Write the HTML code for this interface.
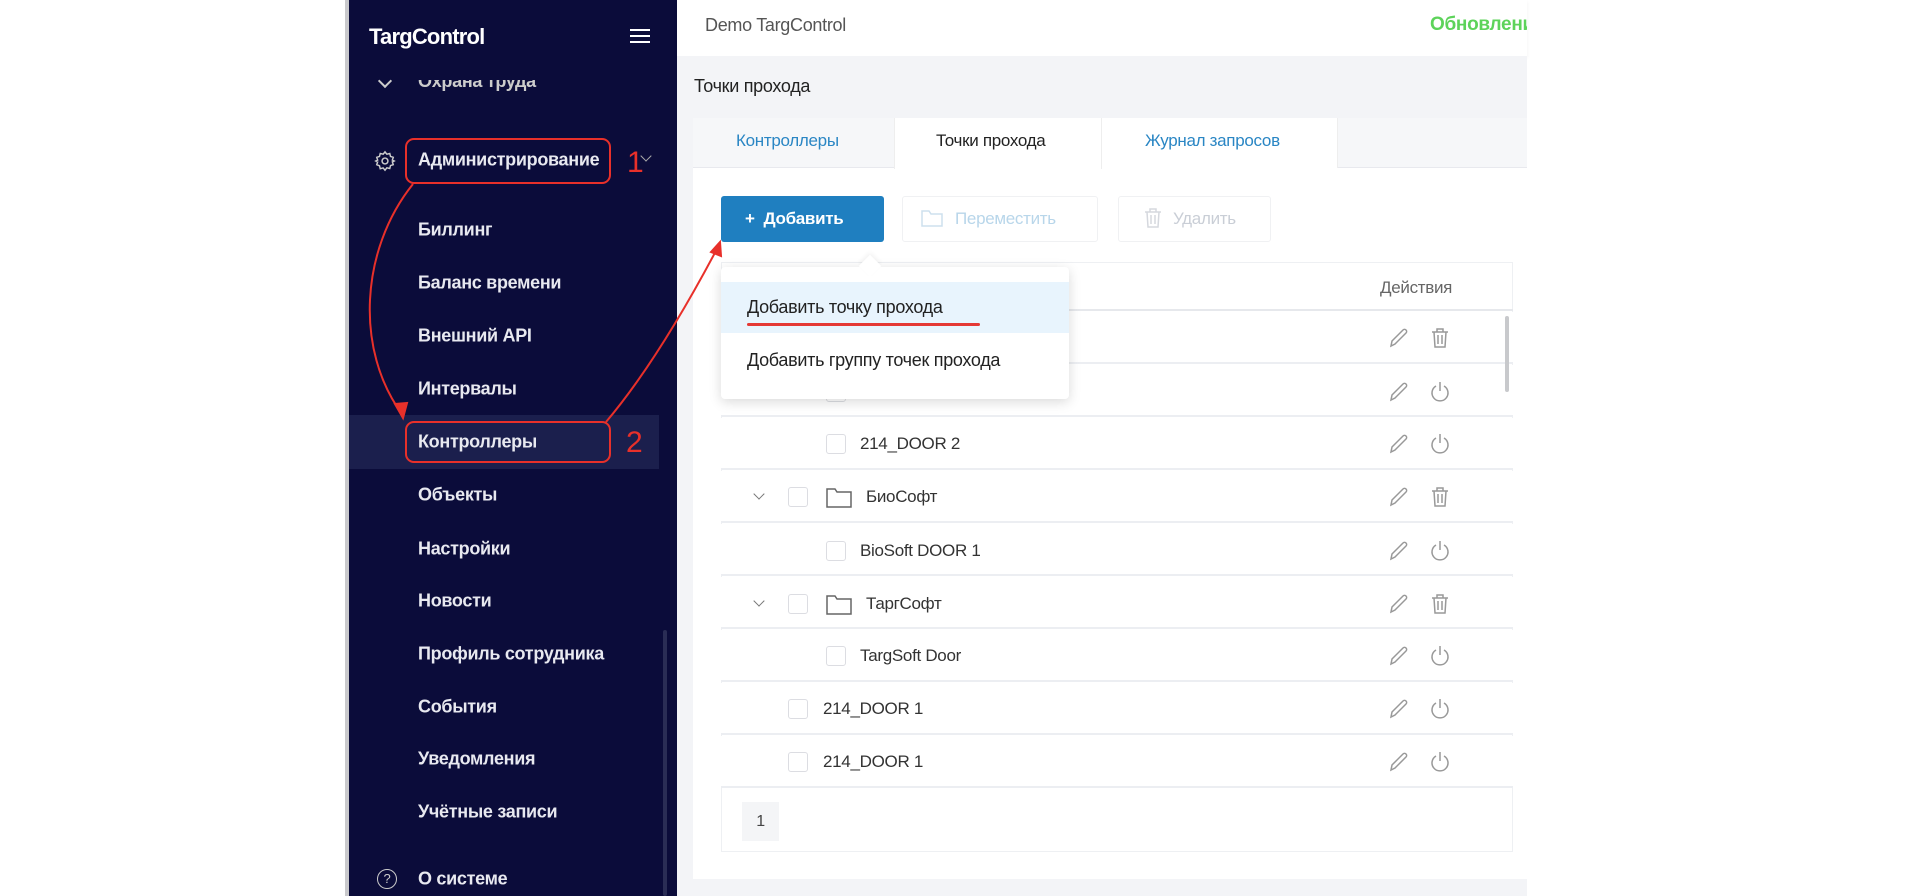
<!DOCTYPE html>
<html><head><meta charset="utf-8"><style>
*{margin:0;padding:0;box-sizing:border-box}
body{width:1920px;height:896px;position:relative;overflow:hidden;background:#fff;font-family:"Liberation Sans","Noto Sans CJK SC",sans-serif;letter-spacing:-0.3px}
.a{position:absolute;white-space:nowrap}
.sb{position:absolute;left:349px;top:0;width:328px;height:896px;background:#0b0c3a}
.mi{position:absolute;left:418px;color:#e8e9f0;font-size:18px;font-weight:bold;transform:translateY(-50%)}
.row{position:absolute;left:721px;width:792px;height:52px;border-bottom:2px solid #eceef2;background:#fff}
.t{position:absolute;font-size:17px;color:#333;transform:translateY(-50%)}
.cb{position:absolute;width:20px;height:20px;border:1px solid #dcdde2;border-radius:3px;background:#fff;transform:translateY(-50%)}
</style></head><body>
<div class="a" style="left:345px;top:0;width:4px;height:896px;background:#c9c9cc"></div>
<div class="sb"></div>
<div class="a" style="left:369px;top:24px;color:#fff;font-size:22px;font-weight:bold;letter-spacing:-0.8px">TargControl</div>
<div class="a" style="left:630px;top:29px;width:20px;height:2px;background:#fff;box-shadow:0 6px 0 #fff,0 12px 0 #fff"></div>
<div class="a" style="left:380px;top:76px;width:10px;height:10px;border-right:2px solid #ccc;border-bottom:2px solid #ccc;transform:rotate(45deg)"></div>
<div class="a" style="left:418px;top:80px;width:200px;height:14px;overflow:hidden"><div class="a" style="left:0;top:-9px;color:#ccc;font-size:18px;font-weight:bold">Охрана труда</div></div>
<svg class="a" style="left:374px;top:150px" width="22" height="22" viewBox="0 0 24 24" fill="none" stroke="#ccc" stroke-width="1.6"><circle cx="12" cy="12" r="3.2"/><path d="M12 2l2 2.6 3.2-.8.8 3.2L21 8l-1 3 2 1-2 1 1 3-3 1-.8 3.2-3.2-.8L12 22l-2-2.4-3.2.8L6 17.2 3 16l1-3-2-1 2-1-1-3 3-1 .8-3.2 3.2.8z"/></svg>
<div class="mi" style="top:160px">Администрирование</div>
<div class="a" style="left:642px;top:152px;width:8px;height:8px;border-right:1.5px solid #aaa;border-bottom:1.5px solid #aaa;transform:rotate(45deg)"></div>
<div class="a" style="left:349px;top:415px;width:310px;height:54px;background:#1b1f4d"></div>
<div class="mi" style="top:230px">Биллинг</div>
<div class="mi" style="top:283px">Баланс времени</div>
<div class="mi" style="top:336px">Внешний API</div>
<div class="mi" style="top:389px">Интервалы</div>
<div class="mi" style="top:442px">Контроллеры</div>
<div class="mi" style="top:495px">Объекты</div>
<div class="mi" style="top:549px">Настройки</div>
<div class="mi" style="top:601px">Новости</div>
<div class="mi" style="top:654px">Профиль сотрудника</div>
<div class="mi" style="top:707px">События</div>
<div class="mi" style="top:759px">Уведомления</div>
<div class="mi" style="top:812px">Учётные записи</div>
<div class="a" style="left:377px;top:869px;width:20px;height:20px;border:1.6px solid #ccc;border-radius:50%;color:#ccc;font-size:13px;text-align:center;line-height:17px">?</div>
<div class="mi" style="top:879px">О системе</div>
<div class="a" style="left:663px;top:630px;width:4px;height:266px;background:#2a2d55;border-radius:2px"></div>
<!-- main -->
<div class="a" style="left:677px;top:0;width:850px;height:56px;background:#fff;box-shadow:0 2px 4px rgba(0,0,0,.06)"></div>
<div class="a" style="left:677px;top:56px;width:850px;height:840px;background:#f3f4f7"></div>
<div class="a" style="left:705px;top:15px;font-size:18px;color:#555">Demo TargControl</div>
<div class="a" style="left:1430px;top:14px;width:97px;overflow:hidden;font-size:19px;color:#5dd35a;font-weight:bold">Обновление</div>
<div class="a" style="left:694px;top:76px;font-size:18px;color:#222">Точки прохода</div>
<div class="a" style="left:693px;top:118px;width:834px;height:761px;background:#fff"></div>
<div class="a" style="left:693px;top:118px;width:834px;height:50px;background:#f6f7f9;border-bottom:1px solid #e8e9ee"></div>
<div class="a" style="left:894px;top:118px;width:208px;height:51px;background:#fff;border-left:1px solid #eee;border-right:1px solid #eee"></div>
<div class="a" style="left:1102px;top:118px;width:236px;height:50px;background:#fff;border-right:1px solid #eee"></div>
<div class="a" style="left:736px;top:131px;font-size:17px;color:#2a86c4">Контроллеры</div>
<div class="a" style="left:936px;top:131px;font-size:17px;color:#222">Точки прохода</div>
<div class="a" style="left:1145px;top:131px;font-size:17px;color:#2a86c4">Журнал запросов</div>
<div class="a" style="left:721px;top:196px;width:163px;height:46px;background:#1f7fc0;border-radius:3px;color:#fff;font-size:17px;font-weight:bold;line-height:46px;padding-left:24px">+&nbsp; Добавить</div>
<div class="a" style="left:902px;top:196px;width:196px;height:46px;border:1px solid #f0f1f3;border-radius:3px;color:#b8d6ea;font-size:17px;line-height:44px;padding-left:52px">Переместить</div>
<svg class="a" style="left:921px;top:209px" width="22" height="18" viewBox="0 0 22 18" fill="none" stroke="#cde0ee" stroke-width="1.5"><path d="M1 2h7l2 3h11v12H1z"/></svg>
<div class="a" style="left:1118px;top:196px;width:153px;height:46px;border:1px solid #f0f1f3;border-radius:3px;color:#c9ced6;font-size:17px;line-height:44px;padding-left:54px">Удалить</div>
<svg class="a" style="left:1143px;top:207px" width="20" height="22" viewBox="0 0 20 22" fill="none" stroke="#d5d8de" stroke-width="1.5"><path d="M2 5h16M7 5V2h6v3M4 5l1 15h10l1-15M8 8v9M12 8v9"/></svg>
<!-- table -->
<div class="a" style="left:721px;top:262px;width:792px;height:590px;border:1px solid #eef0f3;background:#fff"></div>
<div class="a" style="left:1380px;top:278px;font-size:17px;color:#666">Действия</div>
<div class="a" style="left:721px;top:309px;width:792px;height:2px;background:#e6e8ec"></div>
<div class="row" style="top:312px"></div>
<div class="row" style="top:365px"></div>
<div class="row" style="top:418px"></div>
<div class="row" style="top:471px"></div>
<div class="row" style="top:524px"></div>
<div class="row" style="top:577px"></div>
<div class="row" style="top:630px"></div>
<div class="row" style="top:683px"></div>
<div class="row" style="top:736px"></div>
<div class="a" style="left:1505px;top:316px;width:4px;height:76px;background:#c8c9cc;border-radius:2px"></div>
<div class="cb" style="left:826px;top:392px"></div>
<div class="cb" style="left:826px;top:444px"></div><div class="t" style="left:860px;top:444px">214_DOOR 2</div>
<div class="a" style="left:755px;top:490px;width:8px;height:8px;border-right:1.5px solid #777;border-bottom:1.5px solid #777;transform:rotate(45deg)"></div>
<div class="cb" style="left:788px;top:497px"></div>
<svg class="a" style="left:826px;top:486px" width="26" height="22" viewBox="0 0 26 22" fill="none" stroke="#666" stroke-width="1.5"><path d="M1 3h8l2 3h14v15H1z"/></svg>
<div class="t" style="left:866px;top:497px">БиоСофт</div>
<div class="cb" style="left:826px;top:551px"></div><div class="t" style="left:860px;top:551px">BioSoft DOOR 1</div>
<div class="a" style="left:755px;top:597px;width:8px;height:8px;border-right:1.5px solid #777;border-bottom:1.5px solid #777;transform:rotate(45deg)"></div>
<div class="cb" style="left:788px;top:604px"></div>
<svg class="a" style="left:826px;top:593px" width="26" height="22" viewBox="0 0 26 22" fill="none" stroke="#666" stroke-width="1.5"><path d="M1 3h8l2 3h14v15H1z"/></svg>
<div class="t" style="left:866px;top:604px">ТаргСофт</div>
<div class="cb" style="left:826px;top:656px"></div><div class="t" style="left:860px;top:656px">TargSoft Door</div>
<div class="cb" style="left:788px;top:709px"></div><div class="t" style="left:823px;top:709px">214_DOOR 1</div>
<div class="cb" style="left:788px;top:762px"></div><div class="t" style="left:823px;top:762px">214_DOOR 1</div>
<!-- action icons -->
<svg class="a" style="left:1388px;top:0" width="70" height="800">
<defs><g id="p"><path d="M3 20l1-5L15 4a2 2 0 013 3L7 18z" fill="none" stroke="#999" stroke-width="1.5"/></g>
<g id="tr"><path d="M2 5h16M7 5V2h6v3M4 5l1 15h10l1-15M8 8v9M12 8v9" fill="none" stroke="#999" stroke-width="1.5"/></g>
<g id="pw"><path d="M6 6a8 8 0 108 0M10 2v9" fill="none" stroke="#999" stroke-width="1.5"/></g></defs>
<use href="#p" x="0" y="326"/><use href="#tr" x="42" y="327"/>
<use href="#p" x="0" y="380"/><use href="#pw" x="42" y="380"/>
<use href="#p" x="0" y="432"/><use href="#pw" x="42" y="432"/>
<use href="#p" x="0" y="485"/><use href="#tr" x="42" y="486"/>
<use href="#p" x="0" y="539"/><use href="#pw" x="42" y="539"/>
<use href="#p" x="0" y="592"/><use href="#tr" x="42" y="593"/>
<use href="#p" x="0" y="644"/><use href="#pw" x="42" y="644"/>
<use href="#p" x="0" y="697"/><use href="#pw" x="42" y="697"/>
<use href="#p" x="0" y="750"/><use href="#pw" x="42" y="750"/>
</svg>
<div class="a" style="left:742px;top:802px;width:37px;height:39px;background:#f4f5f7;font-size:16px;color:#444;text-align:center;line-height:39px">1</div>
<!-- dropdown -->
<div class="a" style="left:721px;top:267px;width:348px;height:132px;background:#fff;border-radius:4px;box-shadow:0 3px 12px rgba(0,0,0,.15)"></div>
<div class="a" style="left:862px;top:258px;width:16px;height:16px;background:#fff;transform:rotate(45deg);box-shadow:-2px -2px 4px rgba(0,0,0,.05)"></div>
<div class="a" style="left:721px;top:282px;width:348px;height:51px;background:#e8f4fd"></div>
<div class="a" style="left:747px;top:297px;font-size:18px;color:#222">Добавить точку прохода</div>
<div class="a" style="left:747px;top:323px;width:233px;height:3px;background:#e53935;border-radius:2px"></div>
<div class="a" style="left:747px;top:350px;font-size:18px;color:#222">Добавить группу точек прохода</div>
<!-- annotations -->
<div class="a" style="left:405px;top:138px;width:206px;height:46px;border:2px solid #e8302a;border-radius:9px"></div>
<div class="a" style="left:405px;top:421px;width:206px;height:42px;border:2px solid #e8302a;border-radius:9px"></div>
<div class="a" style="left:627px;top:146px;font-size:30px;color:#e8302a">1</div>
<div class="a" style="left:626px;top:426px;font-size:30px;color:#e8302a">2</div>
<svg class="a" style="left:0;top:0" width="1920" height="896" fill="none" stroke="#e8302a" stroke-width="2">
<path d="M413 184C360 250 355 350 402 414"/><path d="M395 404l8 14 4-15z" fill="#e8302a"/>
<path d="M606 422C650 370 690 300 718 247"/><path d="M711 252l9-10 1 14z" fill="#e8302a"/>
</svg>
</body></html>
